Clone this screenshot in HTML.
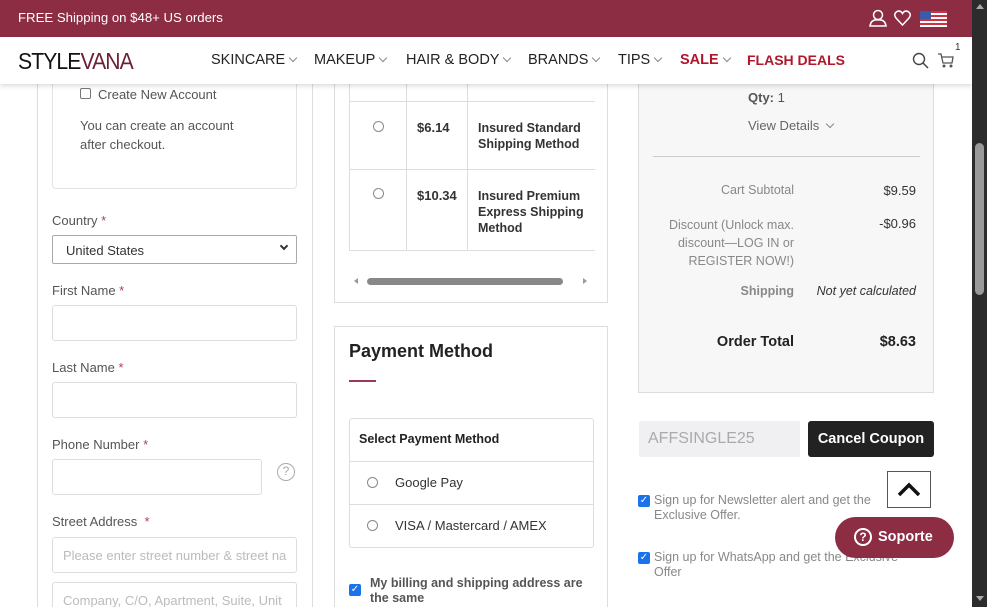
<!DOCTYPE html>
<html style="height:607px;overflow:hidden"><head><meta charset="utf-8"><style>
*{box-sizing:border-box;margin:0;padding:0}
body{width:987px;height:607px;overflow:hidden;position:relative;background:#fff;font-family:"Liberation Sans",Arial,sans-serif;color:#333}
.a{position:absolute}
.top{left:0;top:0;width:972px;height:37px;background:#8c2d43;color:#fff;font-size:13.2px}
.nav{left:0;top:37px;width:972px;height:47px;background:#fff;box-shadow:0 2px 5px rgba(0,0,0,.15);z-index:5}
.nav .m{position:absolute;top:15px;font-size:14.5px;color:#222}
.chev{display:inline-block;width:6px;height:6px;border-right:1px solid #888;border-bottom:1px solid #888;transform:rotate(45deg);margin-left:5px;position:relative;top:-3px}
.sb{left:972px;top:0;width:15px;height:607px;background:#2c2c2c;z-index:9}
.lbl{font-size:13px;color:#555}
.req{color:#b04060}
.inp{border:1px solid #ddd;border-radius:3px;background:#fff}
.ph{font-size:13px;color:#bbb;padding:10px}
.rad{width:11px;height:11px;border:1px solid #888;border-radius:50%;background:#fff}
.cb{width:12px;height:12px;background:#1a73e8;border-radius:2px;color:#fff;font-size:10px;line-height:12px;text-align:center}
.b{font-weight:bold}
</style></head><body>
<div class="a top"><div class="a" style="left:18px;top:10px">FREE Shipping on $48+ US orders</div>
<svg class="a" style="left:868px;top:9px" width="20" height="18" viewBox="0 0 20 18"><circle cx="10" cy="6" r="4.5" fill="none" stroke="#fff" stroke-width="1.5"/><path d="M2 17 Q3 10 10 11 Q17 10 18 17 Z" fill="none" stroke="#fff" stroke-width="1.5"/></svg>
<svg class="a" style="left:894px;top:10px" width="17" height="16" viewBox="0 0 17 16"><path d="M8.5 15 L2 8 Q-1 4 3 1.5 Q6.5 0 8.5 3.5 Q10.5 0 14 1.5 Q18 4 15 8 Z" fill="none" stroke="#fff" stroke-width="1.5"/></svg>
<svg class="a" style="left:920px;top:11px" width="27" height="16" viewBox="0 0 27 16"><rect width="27" height="16" fill="#fff"/><g fill="#d03040"><rect y="0" width="27" height="2"/><rect y="4" width="27" height="2"/><rect y="8" width="27" height="2"/><rect y="12" width="27" height="2"/></g><rect width="11" height="8" fill="#3c5aa8"/></svg>
</div>
<div class="a nav">
<div class="a" style="left:18px;top:11px;font-size:23px;letter-spacing:-1px;color:#111;transform:scaleX(0.92);transform-origin:left">STYLE<span style="color:#6b2134">VANA</span></div>
<div class="m" style="left:211px">SKINCARE<i class="chev"></i></div>
<div class="m" style="left:314px">MAKEUP<i class="chev"></i></div>
<div class="m" style="left:406px">HAIR &amp; BODY<i class="chev"></i></div>
<div class="m" style="left:528px">BRANDS<i class="chev"></i></div>
<div class="m" style="left:618px">TIPS<i class="chev"></i></div>
<div class="m b" style="left:680px;color:#b0172b">SALE<i class="chev"></i></div>
<div class="m b" style="left:747px;color:#b0172b;font-size:14px">FLASH DEALS</div>
<svg class="a" style="left:912px;top:15px" width="18" height="18" viewBox="0 0 18 18"><circle cx="7" cy="7" r="5.5" fill="none" stroke="#444" stroke-width="1.4"/><path d="M11 11 L16 16" stroke="#444" stroke-width="1.5"/></svg>
<svg class="a" style="left:937px;top:16px" width="18" height="16" viewBox="0 0 18 16"><path d="M1 1 H4 L6 10 H15 L16 4 H5" fill="none" stroke="#555" stroke-width="1.3"/><circle cx="7" cy="13" r="1.5" fill="#555"/><circle cx="14" cy="13" r="1.5" fill="#555"/></svg>
<div class="a" style="left:955px;top:5px;font-size:10px;color:#333">1</div>
</div>
<div class="a sb"><div class="a" style="left:3px;top:143px;width:9px;height:152px;background:#9a9a9a;border-radius:5px"></div>
<div class="a" style="left:4px;top:4px;border:4px solid transparent;border-bottom:5px solid #aaa;border-top:0"></div>
<div class="a" style="left:4px;top:596px;border:4px solid transparent;border-top:5px solid #aaa;border-bottom:0"></div></div>

<!-- left column -->
<div class="a" style="left:37px;top:70px;width:276px;height:560px;border:1px solid #ddd;border-top:0"></div>
<div class="a" style="left:52px;top:70px;width:245px;height:119px;border:1px solid #e3e3e3;border-top:0;border-radius:0 0 4px 4px"></div>
<div class="a" style="left:80px;top:88px;width:11px;height:11px;border:1px solid #777;border-radius:2px"></div>
<div class="a lbl" style="left:98px;top:87px">Create New Account</div>
<div class="a lbl" style="left:80px;top:116px;line-height:19px">You can create an account<br>after checkout.</div>
<div class="a lbl" style="left:52px;top:213px">Country <span class="req">*</span></div>
<div class="a" style="left:52px;top:235px;width:245px;height:29px;border:1px solid #aaa;border-radius:2px;font-size:13px;color:#333;padding:7px 13px">United States<span class="a" style="right:9px;top:7px;width:6px;height:6px;border-right:2px solid #333;border-bottom:2px solid #333;transform:rotate(45deg)"></span></div>
<div class="a lbl" style="left:52px;top:283px">First Name <span class="req">*</span></div>
<div class="a inp" style="left:52px;top:305px;width:245px;height:36px"></div>
<div class="a lbl" style="left:52px;top:360px">Last Name <span class="req">*</span></div>
<div class="a inp" style="left:52px;top:382px;width:245px;height:36px"></div>
<div class="a lbl" style="left:52px;top:437px">Phone Number <span class="req">*</span></div>
<div class="a inp" style="left:52px;top:459px;width:210px;height:36px"></div>
<div class="a" style="left:277px;top:463px;width:18px;height:18px;border:1.5px solid #aaa;border-radius:50%;font-size:12px;color:#aaa;text-align:center;line-height:15px">?</div>
<div class="a lbl" style="left:52px;top:514px">Street Address &nbsp;<span class="req">*</span></div>
<div class="a inp ph" style="left:52px;top:537px;width:245px;height:36px;white-space:nowrap;overflow:hidden">Please enter street number &amp; street na</div>
<div class="a inp ph" style="left:52px;top:582px;width:245px;height:36px;white-space:nowrap;overflow:hidden">Company, C/O, Apartment, Suite, Unit</div>

<!-- middle column -->
<div class="a" style="left:334px;top:70px;width:274px;height:233px;border:1px solid #ddd;border-top:0"></div>
<div class="a" style="left:349px;top:70px;width:246px;height:181px;border-left:1px solid #ddd;border-bottom:1px solid #ddd"></div>
<div class="a" style="left:406px;top:70px;width:1px;height:181px;background:#ddd"></div>
<div class="a" style="left:467px;top:70px;width:1px;height:181px;background:#ddd"></div>
<div class="a" style="left:349px;top:101px;width:246px;height:1px;background:#ddd"></div>
<div class="a" style="left:349px;top:169px;width:246px;height:1px;background:#ddd"></div>
<div class="a rad" style="left:373px;top:121px"></div>
<div class="a rad" style="left:373px;top:188px"></div>
<div class="a b" style="left:417px;top:120px;font-size:13px">$6.14</div>
<div class="a b" style="left:417px;top:188px;font-size:13px">$10.34</div>
<div class="a b" style="left:478px;top:120px;font-size:12.5px;line-height:16px">Insured Standard<br>Shipping Method</div>
<div class="a b" style="left:478px;top:188px;font-size:12.5px;line-height:16px">Insured Premium<br>Express Shipping<br>Method</div>
<div class="a" style="left:367px;top:278px;width:196px;height:7px;background:#888;border-radius:4px"></div>
<div class="a" style="left:354px;top:278px;border:3.5px solid transparent;border-right:4px solid #999;border-left:0"></div>
<div class="a" style="left:583px;top:278px;border:3.5px solid transparent;border-left:4px solid #999;border-right:0"></div>

<div class="a" style="left:334px;top:326px;width:274px;height:300px;border:1px solid #ddd"></div>
<div class="a b" style="left:349px;top:341px;font-size:18px;color:#222">Payment Method</div>
<div class="a" style="left:349px;top:380px;width:27px;height:2px;background:#9b3a55"></div>
<div class="a" style="left:349px;top:418px;width:245px;height:130px;border:1px solid #ddd;border-radius:3px"></div>
<div class="a b" style="left:359px;top:432px;font-size:12.5px;color:#222">Select Payment Method</div>
<div class="a" style="left:350px;top:461px;width:243px;height:1px;background:#ddd"></div>
<div class="a" style="left:350px;top:504px;width:243px;height:1px;background:#ddd"></div>
<div class="a rad" style="left:367px;top:477px"></div>
<div class="a" style="left:395px;top:475px;font-size:13px">Google Pay</div>
<div class="a rad" style="left:367px;top:520px"></div>
<div class="a" style="left:395px;top:518px;font-size:13px">VISA / Mastercard / AMEX</div>
<div class="a cb" style="left:349px;top:584px">✓</div>
<div class="a b" style="left:370px;top:576px;font-size:12.5px;color:#555;line-height:15px">My billing and shipping address are<br>the same</div>

<!-- right column -->
<div class="a" style="left:638px;top:70px;width:296px;height:323px;background:#f7f7f7;border:1px solid #ddd;border-top:0"></div>
<div class="a" style="left:748px;top:90px;font-size:13px;color:#555"><b>Qty:</b> 1</div>
<div class="a" style="left:748px;top:118px;font-size:13px;color:#666">View Details<i class="chev" style="margin-left:8px"></i></div>
<div class="a" style="left:653px;top:156px;width:267px;height:1px;background:#ccc"></div>
<div class="a" style="left:640px;top:183px;width:154px;text-align:right;font-size:12.5px;color:#888">Cart Subtotal</div>
<div class="a" style="left:840px;top:183px;width:76px;text-align:right;font-size:13px;color:#333">$9.59</div>
<div class="a" style="left:640px;top:216px;width:154px;text-align:right;font-size:12.5px;color:#888;line-height:18px">Discount (Unlock max.<br>discount—LOG IN or<br>REGISTER NOW!)</div>
<div class="a" style="left:840px;top:216px;width:76px;text-align:right;font-size:13px;color:#333">-$0.96</div>
<div class="a b" style="left:640px;top:284px;width:154px;text-align:right;font-size:12.5px;color:#888">Shipping</div>
<div class="a" style="left:800px;top:284px;width:116px;text-align:right;font-size:12.5px;color:#333;font-style:italic">Not yet calculated</div>
<div class="a b" style="left:640px;top:334px;width:154px;text-align:right;font-size:14.5px;color:#222">Order Total</div>
<div class="a b" style="left:840px;top:334px;width:76px;text-align:right;font-size:14.5px;color:#222">$8.63</div>

<div class="a" style="left:639px;top:421px;width:161px;height:36px;background:#f0f0f2;border-radius:2px;font-size:16px;color:#aaa;padding:9px 9px">AFFSINGLE25</div>
<div class="a b" style="left:808px;top:421px;width:126px;height:36px;background:#222;border-radius:3px;color:#fff;font-size:14.5px;text-align:center;line-height:36px">Cancel Coupon</div>
<div class="a cb" style="left:638px;top:495px">✓</div>
<div class="a" style="left:654px;top:493px;font-size:12.5px;color:#888;line-height:15px">Sign up for Newsletter alert and get the<br>Exclusive Offer.</div>
<div class="a cb" style="left:638px;top:552px">✓</div>
<div class="a" style="left:654px;top:550px;font-size:12.5px;color:#888;line-height:15px">Sign up for WhatsApp and get the Exclusive<br>Offer</div>
<div class="a" style="left:887px;top:471px;width:44px;height:37px;border:1px solid #555;background:#fff"><svg width="42" height="35" viewBox="0 0 42 35"><path d="M11 23 L21 13 L31 23" fill="none" stroke="#111" stroke-width="3.5"/></svg></div>
<div class="a b" style="left:835px;top:517px;width:119px;height:41px;background:#8c2d43;border-radius:21px;color:#fff;font-size:14.5px;line-height:41px;padding-left:43px">Soporte
<span class="a" style="left:19px;top:11px;width:18px;height:18px;border:2px solid #fff;border-radius:50%;font-size:12px;line-height:14px;text-align:center;padding:0">?</span></div>
</body></html>
